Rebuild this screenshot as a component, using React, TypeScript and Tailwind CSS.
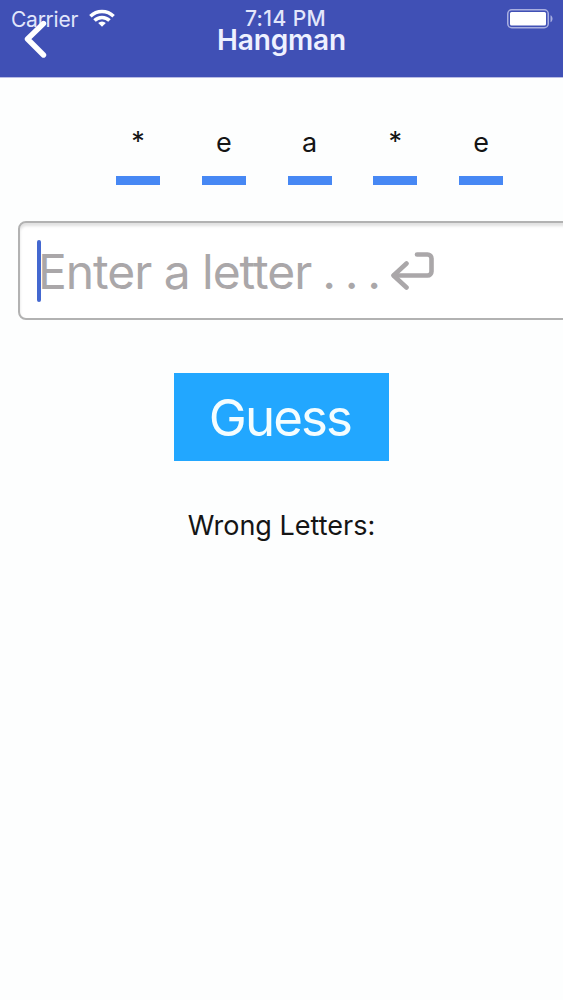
import React, { useState } from 'react';

const word = ['b', 'e', 'a', 'd', 'e'];

const WifiIcon = () => (
  <svg width="26" height="18" viewBox="0 0 26 18" fill="none" stroke="#fff" strokeWidth="3.5">
    <path d="M1.4 7.2a16.6 16.6 0 0 1 23.2 0" />
    <path d="M5.5 11.6a10.6 10.6 0 0 1 15 0" />
    <path d="M13 17.8 9.2 14.1a5.4 5.4 0 0 1 7.6 0z" fill="#fff" stroke="none" />
  </svg>
);

const BatteryIcon = () => (
  <svg width="47" height="20" viewBox="0 0 47 20">
    <rect x="0.75" y="0.75" width="40.5" height="18" rx="4" fill="none" stroke="#a9afe0" strokeWidth="1.5" />
    <rect x="3" y="3" width="36" height="13.5" rx="1.5" fill="#fff" />
    <path d="M43.5 6.3c2.7 1.2 2.7 5.8 0 7z" fill="#a9afe0" />
  </svg>
);

const ReturnIcon = () => (
  <svg
    width="43"
    height="38"
    viewBox="0 0 43 38"
    fill="none"
    stroke="#aaa7a9"
    strokeWidth="4.6"
    strokeLinecap="round"
    strokeLinejoin="round"
  >
    <path d="M26 2.5h10.5a4 4 0 0 1 4 4v13a4 4 0 0 1-4 4H3" />
    <path d="M15.500 11.500 2.500 23.500l13 12" />
  </svg>
);

const StatusBar = () => (
  <div className="grid h-9 grid-cols-3 text-[21px] leading-9 text-[#e2e6fb]">
    <div className="flex items-center pl-[11px]">
      <span className="pt-[2px] tracking-[-0.25px]">Carrier</span>
      <span className="-mt-[3px] ml-[11px]">
        <WifiIcon />
      </span>
    </div>
    <div className="whitespace-nowrap pl-[8px] pt-px text-center font-medium tracking-[0.4px]">7:14 PM</div>
    <div className="flex items-center justify-end pr-[9px]">
      <BatteryIcon />
    </div>
  </div>
);

const Header = () => (
  <header className="h-[78px] border-b border-[#b9bce4] bg-[#4050b5]">
    <StatusBar />
    {/* The title row slides up under the status bar */}
    <div className="relative -mt-4 flex h-10 items-center justify-center">
      <button type="button" aria-label="Back" className="absolute left-[24px] top-0">
        <svg
          width="24"
          height="40"
          viewBox="0 0 24 40"
          fill="none"
          stroke="#fff"
          strokeWidth="5.4"
          strokeLinecap="round"
          strokeLinejoin="round"
        >
          <path d="M19.500 3.500 3.500 19l16 16" />
        </svg>
      </button>
      <h1 className="text-[28px] font-semibold leading-10 tracking-[-0.15px] text-[#eef1ff]">Hangman</h1>
    </div>
  </header>
);

const App = () => {
  const [guessed] = useState(['e', 'a']);

  return (
    <div className="min-h-screen w-full overflow-hidden bg-[#fdfefe] font-['Inter',sans-serif] text-[#151515]">
      <Header />

      {/* Masked word */}
      <div className="flex justify-center gap-[41.75px] pl-14 pt-[47px]">
        {word.map((letter, index) => (
          <div key={index} className="w-11 shrink-0 border-b-[9px] border-[#4788f4] text-center">
            <span
              className={`block h-[51px] text-[27px] ${guessed.includes(letter) ? 'leading-9' : 'leading-[34px]'}`}
            >
              {guessed.includes(letter) ? letter : '*'}
            </span>
          </div>
        ))}
      </div>

      {/* Letter field, runs past the right edge of the screen */}
      <div className="ml-[18px] mt-[36px] flex h-[99px] w-[620px] items-center rounded-lg border-2 border-[#b2b2b2] bg-white pl-[17px] shadow-[inset_0_3px_3px_rgba(0,0,0,0.12)]">
        <span className="h-[62px] w-[4px] rounded-full bg-[#4468d0]" />
        <span className="-ml-[3px] mt-[3px] whitespace-pre text-[48px] leading-none tracking-[-1.05px] text-[#aaa7a9]">
          Enter a letter<span className="tracking-[-2.4px]"> . . .</span>
        </span>
        <span className="ml-[12px]">
          <ReturnIcon />
        </span>
      </div>

      <div className="mt-[53px] flex flex-col items-center">
        <button
          type="button"
          className="h-[88px] w-[215px] bg-[#22a7ff] pr-[3px] text-[51px] leading-none tracking-[-1.9px] text-[#f4fdff]"
        >
          Guess
        </button>
        <p className="mt-[47px] text-[27px] leading-9">Wrong Letters:</p>
      </div>
    </div>
  );
};

export default App;
